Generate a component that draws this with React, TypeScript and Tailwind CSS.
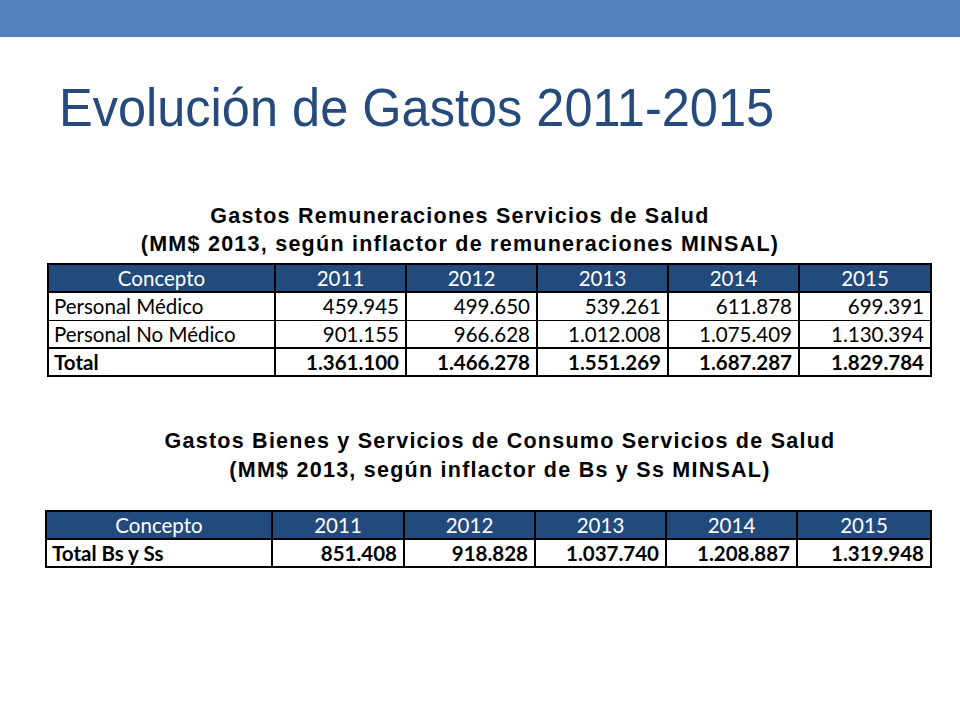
const remuneraciones = [
  { concepto: 'Personal Médico', valores: ['459.945', '499.650', '539.261', '611.878', '699.391'] },
  { concepto: 'Personal No Médico', valores: ['901.155', '966.628', '1.012.008', '1.075.409', '1.130.394'] },
]
const totalRem = ['1.361.100', '1.466.278', '1.551.269', '1.687.287', '1.829.784']
const totalBs = ['851.408', '918.828', '1.037.740', '1.208.887', '1.319.948']
const years = ['2011', '2012', '2013', '2014', '2015']

function HeaderRow() {
  return (
    <tr className="h-[28px] bg-[#234a7c] text-white">
      <th className="border-2 border-black p-0 font-normal text-center">Concepto</th>
      {years.map((y) => (
        <th key={y} className="border-2 border-black p-0 font-normal text-center">
          {y}
        </th>
      ))}
    </tr>
  )
}

export default function App() {
  return (
    <div className="w-[960px] h-[720px] bg-white overflow-hidden">
      <div className="h-[37px] bg-[#4f81bd]" />

      {/* Title */}
      <div className="pt-[41px] pl-[59px]">
        <h1
          className="text-[53px] leading-[60px] text-[#254a7c] origin-left scale-x-[0.953] whitespace-nowrap"
          style={{ fontFamily: '"Liberation Sans", Arial, sans-serif' }}
        >
          Evolución de Gastos 2011-2015
        </h1>
      </div>

      {/* Remuneraciones */}
      <div
        className="mt-[64px] w-[920px] text-center text-[21.5px] leading-[28px] font-bold tracking-[1.25px] text-black"
        style={{ fontFamily: '"Liberation Sans", Arial, sans-serif' }}
      >
        <div>Gastos Remuneraciones Servicios de Salud</div>
        <div>(MM$ 2013, según inflactor de remuneraciones MINSAL)</div>
      </div>

      <table
        className="mt-[5px] ml-[47px] w-[883px] table-fixed border-collapse border-2 border-black text-[20.5px] leading-none text-black"
        style={{ fontFamily: 'Lato, "Open Sans", sans-serif' }}
      >
        <colgroup>
          <col className="w-[227px]" />
          <col className="w-[131px]" />
          <col className="w-[131px]" />
          <col className="w-[131px]" />
          <col className="w-[131px]" />
          <col className="w-[132px]" />
        </colgroup>
        <thead>
          <HeaderRow />
        </thead>
        <tbody>
          {remuneraciones.map((r) => (
            <tr key={r.concepto} className="h-[28px]">
              <td className="border border-x-2 border-black p-0 pl-[5px] text-left">{r.concepto}</td>
              {r.valores.map((v, i) => (
                <td key={i} className="border border-x-2 border-black p-0 pr-[6px] text-right">
                  {v}
                </td>
              ))}
            </tr>
          ))}
          <tr className="h-[28px] font-bold">
            <td className="border-2 border-black p-0 pl-[5px] text-left">Total</td>
            {totalRem.map((v, i) => (
              <td key={i} className="border-2 border-black p-0 pr-[6px] text-right">
                {v}
              </td>
            ))}
          </tr>
        </tbody>
      </table>

      {/* Bienes y Servicios */}
      <div
        className="mt-[50px] pl-[40px] w-[960px] text-center text-[21.5px] leading-[29px] font-bold tracking-[1.25px] text-black"
        style={{ fontFamily: '"Liberation Sans", Arial, sans-serif' }}
      >
        <div>Gastos Bienes y Servicios de Consumo Servicios de Salud</div>
        <div>(MM$ 2013, según inflactor de Bs y Ss MINSAL)</div>
      </div>

      <table
        className="mt-[25px] ml-[45px] w-[885px] table-fixed border-collapse border-2 border-black text-[20.5px] leading-none text-black"
        style={{ fontFamily: 'Lato, "Open Sans", sans-serif' }}
      >
        <colgroup>
          <col className="w-[226px]" />
          <col className="w-[132px]" />
          <col className="w-[131px]" />
          <col className="w-[131px]" />
          <col className="w-[131px]" />
          <col className="w-[134px]" />
        </colgroup>
        <thead>
          <HeaderRow />
        </thead>
        <tbody>
          <tr className="h-[28px] font-bold">
            <td className="border-2 border-black p-0 pl-[5px] text-left">Total Bs y Ss</td>
            {totalBs.map((v, i) => (
              <td key={i} className="border-2 border-black p-0 pr-[6px] text-right">
                {v}
              </td>
            ))}
          </tr>
        </tbody>
      </table>
    </div>
  )
}
